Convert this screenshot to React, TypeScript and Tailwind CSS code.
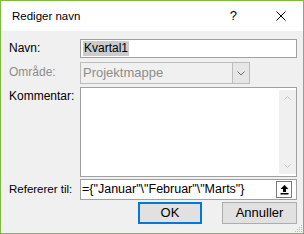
import React from "react";

const font = { fontFamily: '"Segoe UI", "Liberation Sans", Arial, sans-serif' };

const UpArrowIcon = () => (
  <svg width="9" height="11" viewBox="0 0 9 11">
    <path d="M4.5 1 L8.5 5 L6 5 L6 8 L3 8 L3 5 L0.5 5 Z" fill="#000" />
    <rect x="0.5" y="9" width="8" height="1.5" fill="#000" />
  </svg>
);

const Chevron = ({ up }: { up?: boolean }) => (
  <svg width="7" height="4" viewBox="0 0 7 4">
    <path d={up ? "M0.5 3.5 L3.5 0.5 L6.5 3.5" : "M0.5 0.5 L3.5 3.5 L6.5 0.5"} fill="none" stroke="#c2c2c2" strokeWidth="1" />
  </svg>
);

const App = () => {
  return (
    <div
      className="w-[304px] h-[234px] border border-[#7fba3f] flex flex-col text-[12px] text-black bg-[#f0f0f0]"
      style={font}
    >
      <div className="h-[30px] bg-white flex items-center pl-[11px] pr-[17px] shrink-0">
        <span className="flex-1 text-[11.5px] pt-[1px]">Rediger navn</span>
        <span className="text-[13px] mr-[39px]">?</span>
        <svg width="10" height="10" viewBox="0 0 10 10">
          <path d="M0.5 0.5 L9.5 9.5 M9.5 0.5 L0.5 9.5" stroke="#000" strokeWidth="1" />
        </svg>
      </div>

      <div className="flex-1 pl-[8px] pr-[6px] pt-[8px] relative">
        <div className="grid grid-cols-[71px_1fr] gap-y-0">
          <label className="leading-[19px] h-[19px]">Navn:</label>
          <div className="h-[19px] border border-[#a0a0a0] bg-white flex items-center pl-[2px]">
            <span className="bg-[#cccccc] leading-[15px] px-[1px]">Kvartal1</span>
          </div>

          <label className="mt-[4px] leading-[21px] text-[#8d8d8d]">Område:</label>
          <div className="mt-[4px] h-[22px] w-[170px] border border-[#bcbcbc] bg-[#f0f0f0] flex items-stretch">
            <span className="flex-1 pl-[2px] text-[13px] leading-[20px] text-[#8d8d8d]">Projektmappe</span>
            <div className="w-[17px] border-l border-[#bcbcbc] bg-[#e6e6e6] flex items-center justify-center">
              <svg width="8" height="5" viewBox="0 0 8 5">
                <path d="M0.5 0.5 L4 4 L7.5 0.5" fill="none" stroke="#6d6d6d" strokeWidth="1" />
              </svg>
            </div>
          </div>

          <label className="mt-[3px] leading-[18px]">Kommentar:</label>
          <div className="mt-[3px] h-[90px] border border-[#a0a0a0] bg-white flex justify-end pt-[2px] pb-[2px]">
            <div className="w-[17px] bg-[#f0f0f0] flex flex-col justify-between items-center py-[6px]">
              <Chevron up />
              <Chevron />
            </div>
          </div>

          <label className="mt-[2px] leading-[20px] text-[11.5px]">Refererer til:</label>
          <div className="mt-[2px] h-[21px] border border-[#a0a0a0] bg-white flex items-center pl-[1px] pr-[4px]">
            <span className="flex-1 text-[12.5px] leading-[19px]">={"{"}"Januar"\"Februar"\"Marts"{"}"}</span>
            <div className="w-[16px] h-[17px] border border-[#7a7a7a] bg-white flex items-center justify-center">
              <UpArrowIcon />
            </div>
          </div>
        </div>

        <div className="flex justify-end gap-[20px] mt-[2px]">
          <button className="w-[64px] h-[22px] border-2 border-[#0078d7] bg-[#e1e1e1] text-[13px] leading-[18px]">
            OK
          </button>
          <button className="w-[75px] h-[22px] border border-[#adadad] bg-[#e1e1e1] text-[13px]">
            Annuller
          </button>
        </div>

        <svg className="absolute right-[0px] bottom-[0px]" width="10" height="10" viewBox="0 0 10 10">
          <g fill="#b8b8b8">
            <rect x="8" y="2" width="1" height="1" />
            <rect x="6" y="4" width="1" height="1" />
            <rect x="8" y="4" width="1" height="1" />
            <rect x="4" y="6" width="1" height="1" />
            <rect x="6" y="6" width="1" height="1" />
            <rect x="8" y="6" width="1" height="1" />
            <rect x="2" y="8" width="1" height="1" />
            <rect x="4" y="8" width="1" height="1" />
            <rect x="6" y="8" width="1" height="1" />
            <rect x="8" y="8" width="1" height="1" />
          </g>
        </svg>
      </div>
    </div>
  );
};

export default App;
